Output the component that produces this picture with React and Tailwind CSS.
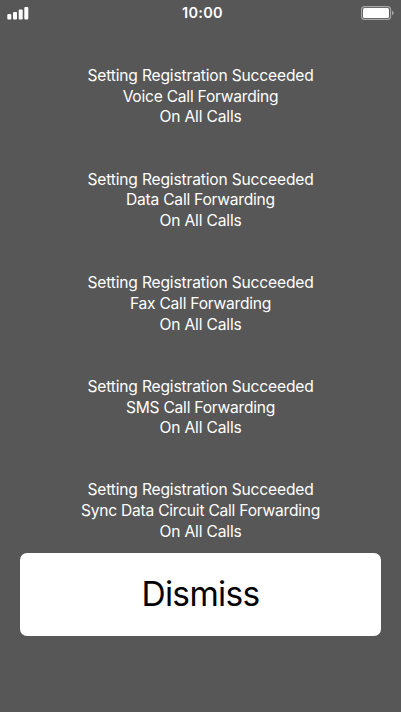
const notices = ['Voice', 'Data', 'Fax', 'SMS', 'Sync Data Circuit'];

function StatusBar() {
  return (
    <header className="grid h-[26px] grid-cols-3 items-center text-white">
      <svg className="ml-[7px] h-[13px] w-[22px]" viewBox="0 0 22 13" fill="currentColor">
        <rect x="0.3" y="7" width="4" height="5.6" rx="1" />
        <rect x="6" y="5" width="4" height="7.6" rx="1" />
        <rect x="11.7" y="2.4" width="4" height="10.2" rx="1" />
        <rect x="17.3" y="0" width="4" height="12.6" rx="1" />
      </svg>
      <span className="pl-1 text-center text-[14.5px] font-semibold tracking-[0.3px]">10:00</span>
      <svg className="ml-auto mr-[6px] h-[14px] w-[34px]" viewBox="0 0 34 14" fill="none">
        <rect x="0.6" y="0.6" width="29" height="12.8" rx="3" stroke="#a8a8a8" strokeWidth="1.1" />
        <rect x="2" y="2" width="26" height="10" rx="1.5" fill="white" />
        <path d="M31 4.8c2.2.8 2.2 3.6 0 4.4z" fill="#a8a8a8" />
      </svg>
    </header>
  );
}

export default function App() {
  return (
    <div className="flex h-[712px] w-[401px] flex-col bg-[#575757] font-['Inter',sans-serif]">
      <StatusBar />
      <main className="flex flex-col px-5 pt-10">
        <div className="flex flex-col gap-[41.5px] text-center text-[15.6px] leading-[20.7px] tracking-[-0.17px] text-white">
          {notices.map((name) => (
            <div key={name}>
              <p>Setting Registration Succeeded</p>
              <p className="tracking-[-0.24px]">{name} Call Forwarding</p>
              <p>On All Calls</p>
            </div>
          ))}
        </div>
        <button className="mt-[10px] h-[83px] rounded-[7px] bg-white pt-px text-[33.5px] tracking-[-0.65px] text-black">
          Dismiss
        </button>
      </main>
    </div>
  );
}
